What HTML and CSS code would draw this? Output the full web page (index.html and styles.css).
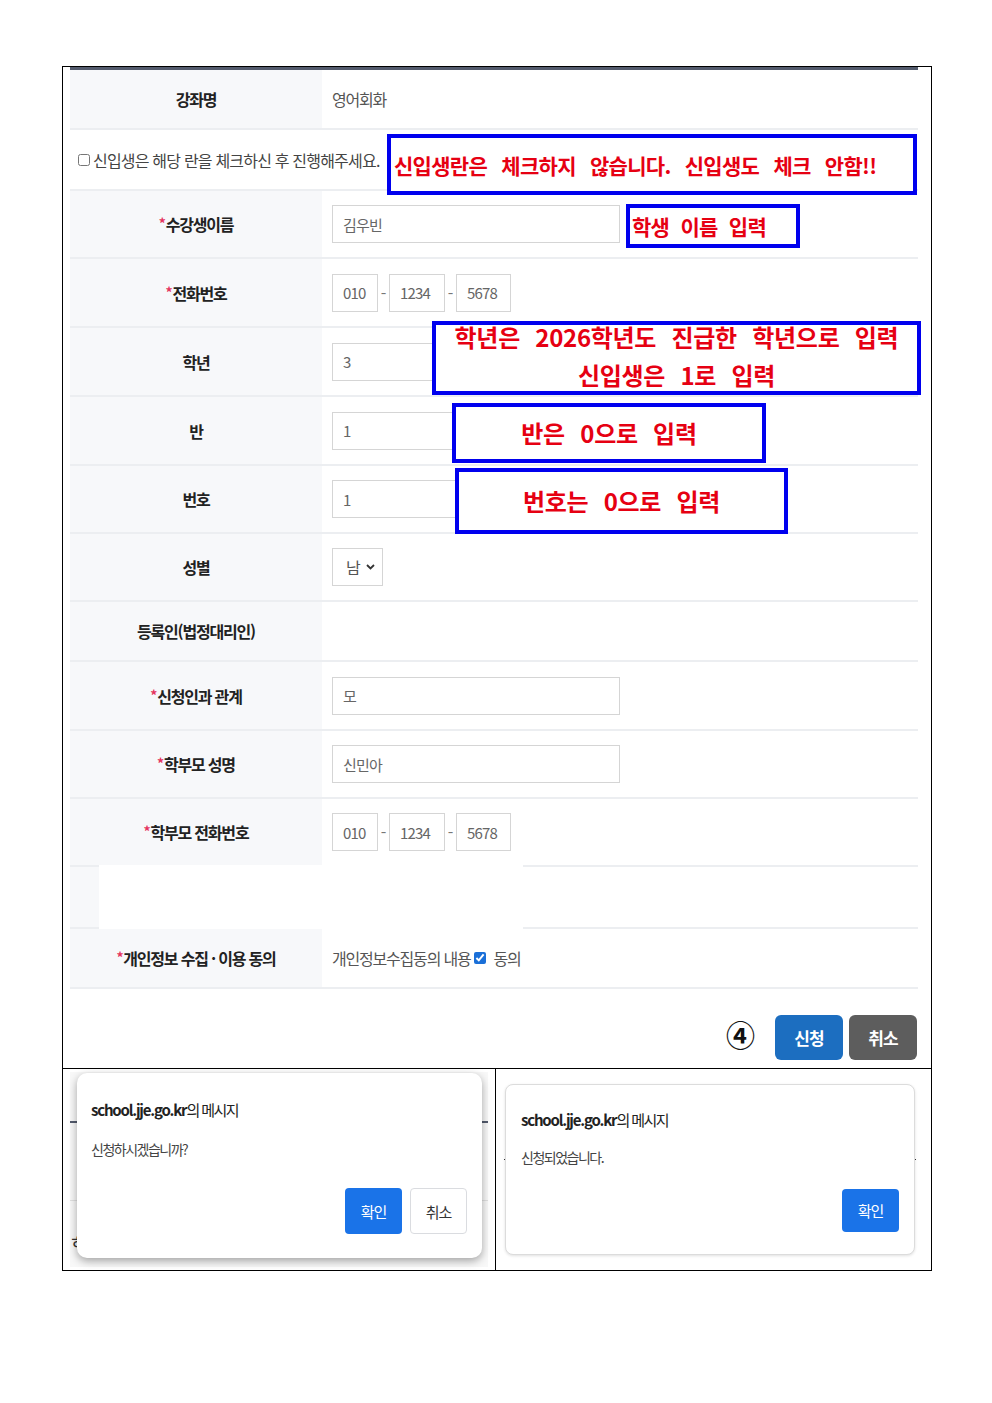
FILE: index.html
```html
<!DOCTYPE html>
<html lang="ko">
<head>
	<meta charset="UTF-8">
	<title>수강 신청 안내</title>
	<link rel="stylesheet" href="styles.css">
</head>
<body>
	<div class="sheet">
		<div class="top">
			<div class="form">
				<div class="row low">
					<div class="th">강좌명</div>
					<div class="td">영어회화</div>
				</div>
				<div class="row line">
					<label class="fresh"><input type="checkbox">신입생은 해당 란을 체크하신 후 진행해주세요.</label>
				</div>
				<div class="row">
					<div class="th"><i>*</i>수강생이름</div>
					<div class="td"><input type="text" class="inp wide" value="김우빈"></div>
				</div>
				<div class="row tall">
					<div class="th"><i>*</i>전화번호</div>
					<div class="td">
						<input type="text" class="inp p1" value="010"><span class="dash">-</span>
						<input type="text" class="inp p2" value="1234"><span class="dash">-</span>
						<input type="text" class="inp p3" value="5678">
					</div>
				</div>
				<div class="row tall">
					<div class="th">학년</div>
					<div class="td"><input type="text" class="inp wide" value="3"></div>
				</div>
				<div class="row tall">
					<div class="th">반</div>
					<div class="td"><input type="text" class="inp wide" value="1"></div>
				</div>
				<div class="row">
					<div class="th">번호</div>
					<div class="td"><input type="text" class="inp wide" value="1"></div>
				</div>
				<div class="row">
					<div class="th">성별</div>
					<div class="td">
						<div class="sel">남<svg width="9" height="6" viewBox="0 0 9 6"><path d="M1 1l3.5 3.5L8 1" fill="none" stroke="#333" stroke-width="1.8"/></svg></div>
					</div>
				</div>
				<div class="row low">
					<div class="th">등록인(법정대리인)</div>
					<div class="td"></div>
				</div>
				<div class="row tall">
					<div class="th"><i>*</i>신청인과 관계</div>
					<div class="td"><input type="text" class="inp wide" value="모"></div>
				</div>
				<div class="row">
					<div class="th"><i>*</i>학부모 성명</div>
					<div class="td"><input type="text" class="inp wide" value="신민아"></div>
				</div>
				<div class="row">
					<div class="th"><i>*</i>학부모 전화번호</div>
					<div class="td">
						<input type="text" class="inp p1" value="010"><span class="dash">-</span>
						<input type="text" class="inp p2" value="1234"><span class="dash">-</span>
						<input type="text" class="inp p3" value="5678">
					</div>
				</div>
				<div class="row blank">
					<div class="th"></div>
					<div class="td"></div>
					<div class="mask"></div>
				</div>
				<div class="row low">
					<div class="th"><i>*</i>개인정보 수집 · 이용 동의</div>
					<div class="td">개인정보수집동의 내용<input type="checkbox" class="agree" checked>동의</div>
				</div>
				<div class="actions">
					<span class="step">④</span>
					<button class="btn blue">신청</button>
					<button class="btn gray">취소</button>
				</div>
			</div>

			<div class="note n1"><p>신입생란은 체크하지 않습니다. 신입생도 체크 안함!!</p></div>
			<div class="note n2"><p>학생 이름 입력</p></div>
			<div class="note n3 big"><p>학년은 2026학년도 진급한 학년으로 입력<br>신입생은 1로 입력</p></div>
			<div class="note n4 big"><p>반은 0으로 입력</p></div>
			<div class="note n5 big"><p>번호는 0으로 입력</p></div>
		</div>

		<div class="bottom">
			<div class="cell left">
				<div class="shot">
					<div class="bar"></div>
					<div class="faint"></div>
					<span class="cut">ㅎ</span>
					<div class="dialog raised">
						<div class="title"><b>school.jje.go.kr</b>의 메시지</div>
						<div class="msg">신청하시겠습니까?</div>
						<div class="dbtns">
							<button class="ok">확인</button>
							<button class="no">취소</button>
						</div>
					</div>
				</div>
			</div>
			<div class="cell right">
				<div class="shot light">
					<div class="bar thin"></div>
					<div class="dialog flat">
						<div class="title"><b>school.jje.go.kr</b>의 메시지</div>
						<div class="msg">신청되었습니다.</div>
						<div class="dbtns">
							<button class="ok">확인</button>
						</div>
					</div>
				</div>
			</div>
		</div>
	</div>
</body>
</html>
```

FILE: styles.css
```css
body{
	margin: 0;
	background: #fff;
	font-family: "Noto Sans CJK KR", "Noto Sans", sans-serif;
	color: #222;
}
.sheet{
	position: relative;
	width: 870px;
	margin: 66px 0 0 62px;
	border: 1px solid #000;
	box-sizing: border-box;
}
.top{
	height: 1001px;
	padding-left: 7px;
	border-bottom: 1px solid #000;
}

/* form screenshot */
.form{
	width: 848px;
	border-top: 3px solid #535b6d;
}
.row{
	position: relative;
	display: grid;
	grid-template-columns: 252px 1fr;
	min-height: 66px;
	border-bottom: 2px solid #eceef1;
}
.row.tall{ min-height: 67px; }
.row.low{ min-height: 58px; }
.row.line{
	display: flex;
	align-items: center;
	min-height: 59px;
}
.row.blank{ min-height: 60px; }
.th{
	display: flex;
	align-items: center;
	justify-content: center;
	background: #f7f8fa;
	font-size: 16px;
	font-weight: 700;
	letter-spacing: -1.2px;
	color: #222;
}
.th i{
	font-style: normal;
	color: #e5345e;
	font-size: 14px;
	margin-right: 1px;
	position: relative;
	top: -1px;
}
.td{
	display: flex;
	align-items: center;
	padding-left: 10px;
	font-size: 16px;
	letter-spacing: -1.2px;
	color: #555;
}
.fresh{
	display: flex;
	align-items: center;
	padding-left: 6px;
	font-size: 16px;
	letter-spacing: -0.8px;
	color: #444;
}
.fresh input{
	width: 12px;
	height: 12px;
	margin: 0 3px 0 2px;
}
.inp{
	height: 38px;
	box-sizing: border-box;
	border: 1px solid #d5d5d5;
	padding: 0 10px;
	font-family: "Noto Sans CJK KR", sans-serif;
	font-size: 15px;
	letter-spacing: -0.8px;
	color: #666;
	background: #fff;
}
.wide{ width: 288px; }
.p1{ width: 46px; }
.p2{ width: 56px; }
.p3{ width: 55px; }
.dash{
	width: 11px;
	text-align: center;
	color: #777;
	letter-spacing: 0;
}
.sel{
	display: flex;
	align-items: center;
	justify-content: space-between;
	width: 51px;
	height: 38px;
	box-sizing: border-box;
	border: 1px solid #d5d5d5;
	padding: 0 7px 0 13px;
	color: #555;
}
.mask{
	position: absolute;
	left: 29px;
	top: -2px;
	width: 424px;
	height: 65px;
	background: #fff;
}
.agree{
	width: 12px;
	height: 12px;
	margin: 0 7px 0 4px;
	accent-color: #1a6fd8;
}
.actions{
	display: flex;
	justify-content: flex-end;
	align-items: center;
	gap: 6px;
	margin-top: 26px;
	padding-right: 1px;
}
.step{
	font-size: 29px;
	font-weight: 700;
	color: #111;
	margin-right: 14px;
	line-height: 1;
	position: relative;
	top: -3px;
}
.btn{
	width: 68px;
	height: 45px;
	border: 0;
	border-radius: 6px;
	color: #fff;
	font-family: "Noto Sans CJK KR", sans-serif;
	font-size: 17px;
	font-weight: 700;
	letter-spacing: -1px;
}
.btn.blue{ background: #1c6ec0; }
.btn.gray{ background: #5d5d5d; }

/* red notes in blue boxes */
.note{
	position: absolute;
	display: flex;
	align-items: center;
	box-sizing: border-box;
	border: 4px solid #0000ee;
	background: #fff;
	color: #e60012;
	font-weight: 700;
	font-size: 21px;
	letter-spacing: -0.7px;
	word-spacing: 9px;
	white-space: nowrap;
}
.note p{ margin: 0; }
.note.big{
	justify-content: center;
	text-align: center;
	font-size: 24px;
	letter-spacing: -0.3px;
	word-spacing: 9px;
	line-height: 38px;
}
.n1{ left: 324px; top: 67px; width: 530px; height: 61px; padding-left: 3px; }
.n2{ left: 563px; top: 137px; width: 174px; height: 44px; padding-left: 2px; word-spacing: 6px; }
.n3{ left: 369px; top: 254px; width: 489px; height: 74px; }
.n3 p{ position: relative; top: -2px; }
.n4{ left: 389px; top: 336px; width: 314px; height: 60px; }
.n5{ left: 392px; top: 401px; width: 333px; height: 66px; }

/* alert screenshots */
.bottom{
	display: flex;
	height: 201px;
}
.cell{
	width: 433px;
	box-sizing: border-box;
}
.cell.left{
	border-right: 1px solid #000;
	padding: 3px 0 0 7px;
}
.cell.right{
	width: 434px;
	padding: 14px 0 0 8px;
}
.shot{
	position: relative;
	width: 418px;
	height: 195px;
	background: #f8f8f8;
}
.shot.light{
	width: 412px;
	height: 173px;
	background: #fff;
}
.bar{
	position: absolute;
	left: 0;
	right: 0;
	top: 49px;
	height: 2px;
	background: #535b6d;
}
.bar.thin{
	top: 76px;
	height: 1px;
	background: #333;
}
.faint{
	position: absolute;
	left: 0;
	right: 0;
	top: 128px;
	height: 1px;
	background: #e0e0e0;
}
.cut{
	position: absolute;
	left: -1px;
	top: 156px;
	font-size: 18px;
	color: #333;
}
.dialog{
	position: absolute;
	box-sizing: border-box;
	background: #fff;
	padding: 0 15px 0 14px;
}
.dialog.raised{
	left: 7px;
	top: 1px;
	width: 405px;
	height: 185px;
	border-radius: 10px;
	box-shadow: 0 3px 9px rgba(0,0,0,.35);
}
.dialog.flat{
	left: 1px;
	top: 1px;
	width: 410px;
	height: 171px;
	border: 1px solid #dcdcdc;
	border-radius: 8px;
	box-shadow: 0 1px 3px rgba(0,0,0,.12);
	padding: 0 15px 0 15px;
}
.title{
	margin-top: 25px;
	font-size: 15px;
	line-height: 24px;
	letter-spacing: -1.6px;
	color: #222;
}
.title b{ font-weight: 700; letter-spacing: -1.2px; }
.msg{
	margin-top: 17px;
	font-size: 14px;
	line-height: 20px;
	letter-spacing: -1.5px;
	color: #444;
}
.dialog.flat .title{ margin-top: 23px; }
.dialog.flat .msg{ margin-top: 15px; }
.dbtns{
	display: flex;
	justify-content: flex-end;
	gap: 8px;
	margin-top: 29px;
}
.dialog.flat .dbtns{ margin-top: 22px; }
.ok, .no{
	width: 57px;
	height: 46px;
	border-radius: 4px;
	font-family: "Noto Sans CJK KR", sans-serif;
	font-size: 15px;
	letter-spacing: -1px;
}
.ok{
	border: 0;
	background: #1a73e8;
	color: #fff;
}
.no{
	border: 1px solid #dadce0;
	background: #fff;
	color: #333;
}
.dialog.flat .ok{ height: 43px; }
```
